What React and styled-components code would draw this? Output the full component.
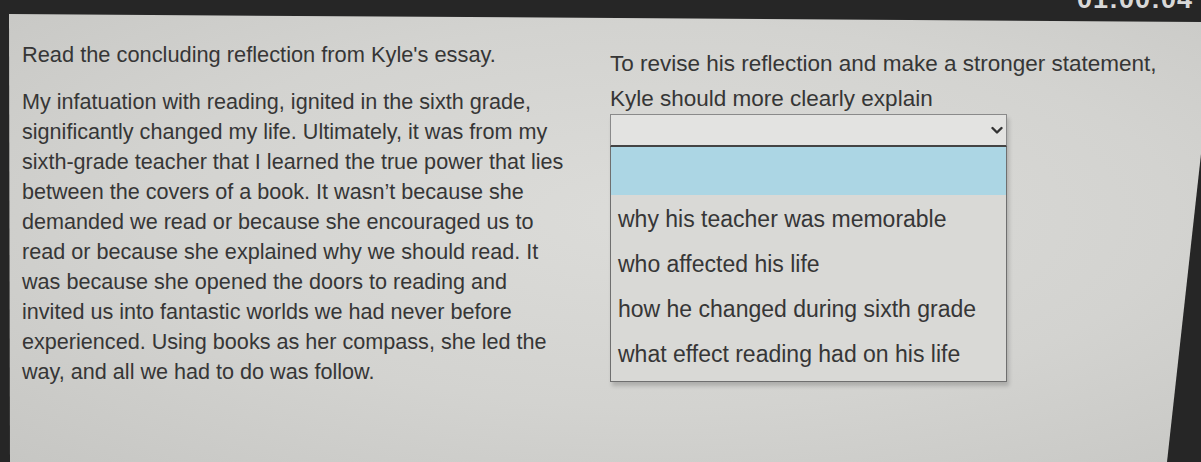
import React from 'react'
import styled, { createGlobalStyle } from 'styled-components'

const GlobalStyle = createGlobalStyle`
  html, body {
    margin: 0;
    padding: 0;
    background: #2a2a2a;
  }
  body {
    font-family: "Liberation Sans", Arial, sans-serif;
  }
`

const Screen = styled.div`
  width: 1201px;
  height: 462px;
  display: flex;
  flex-direction: column;
  background: #262626;
  overflow: hidden;
`

const TopBar = styled.div`
  height: 14px;
  flex: none;
  display: flex;
  justify-content: flex-end;
  align-items: flex-start;
  padding-right: 8px;
  overflow: hidden;
`

const Timer = styled.span`
  font-size: 27px;
  line-height: 1;
  font-weight: 700;
  color: #d8d8d8;
  margin-top: -14px;
  letter-spacing: 1px;
`

const Panel = styled.div`
  flex: 1;
  display: grid;
  grid-template-columns: 588px 1fr;
  padding: 26px 0 0 22px;
  background:
    radial-gradient(ellipse at 55% 45%, #dcdcd9 0%, #d3d3d0 55%, #c6c6c3 100%);
  clip-path: polygon(9px 0, 100% 8px, 100% 140px, calc(100% - 34px) 100%, 18px 100%, 10px 100%);
  color: #363636;
`

const Passage = styled.div`
  display: flex;
  flex-direction: column;
`

const Prompt = styled.p`
  margin: 0 0 17px;
  font-size: 21.8px;
  line-height: 30px;
  white-space: nowrap;
`

const Essay = styled.p`
  margin: 0;
  font-size: 21.6px;
  line-height: 30px;
  white-space: nowrap;
`

const Question = styled.div`
  display: flex;
  flex-direction: column;
  padding-top: 6px;
`

const Stem = styled.p`
  margin: 0 0 -2px;
  font-size: 22.5px;
  line-height: 35px;
  white-space: nowrap;
`

const Dropdown = styled.div`
  width: 397px;
  display: flex;
  flex-direction: column;
  box-shadow: 2px 4px 4px rgba(0, 0, 0, 0.18);
`

const Select = styled.div`
  height: 30px;
  display: flex;
  align-items: center;
  justify-content: flex-end;
  padding-right: 3px;
  background: #e3e3e1;
  border: 1px solid #8a8a8a;
  border-bottom: 2px solid #444;
  color: #333;
`

const List = styled.ul`
  list-style: none;
  margin: 0;
  padding: 0 0 4px;
  background: #d9d9d6;
  border: 1px solid #6f6f6f;
  border-top: none;
`

const Option = styled.li`
  height: ${p => (p.$blank ? '48px' : '45px')};
  display: flex;
  align-items: center;
  padding-left: 7px;
  font-size: 23px;
  color: #363636;
  white-space: nowrap;
  background: ${p => (p.$active ? '#acd6e4' : 'transparent')};
  margin-bottom: ${p => (p.$blank ? '2px' : '0')};
`

const essayLines = [
  'My infatuation with reading, ignited in the sixth grade,',
  'significantly changed my life. Ultimately, it was from my',
  'sixth-grade teacher that I learned the true power that lies',
  'between the covers of a book. It wasn\u2019t because she',
  'demanded we read or because she encouraged us to',
  'read or because she explained why we should read. It',
  'was because she opened the doors to reading and',
  'invited us into fantastic worlds we had never before',
  'experienced. Using books as her compass, she led the',
  'way, and all we had to do was follow.',
]

const choices = [
  'why his teacher was memorable',
  'who affected his life',
  'how he changed during sixth grade',
  'what effect reading had on his life',
]

function Chevron() {
  return (
    <svg width="12" height="9" viewBox="0 0 12 9">
      <path d="M1.5 2 L6 6.5 L10.5 2" fill="none" stroke="#333" strokeWidth="2.4" strokeLinecap="round" strokeLinejoin="round" />
    </svg>
  )
}

export default function App() {
  return (
    <Screen>
      <GlobalStyle />
      <TopBar>
        <Timer>01:00:04</Timer>
      </TopBar>
      <Panel>
        <Passage>
          <Prompt>Read the concluding reflection from Kyle's essay.</Prompt>
          <Essay>
            {essayLines.map((line, i) => (
              <React.Fragment key={i}>
                {line}
                {i < essayLines.length - 1 && <br />}
              </React.Fragment>
            ))}
          </Essay>
        </Passage>
        <Question>
          <Stem>
            To revise his reflection and make a stronger statement,
            <br />
            Kyle should more clearly explain
          </Stem>
          <Dropdown>
            <Select>
              <Chevron />
            </Select>
            <List>
              <Option $blank $active />
              {choices.map(c => (
                <Option key={c}>{c}</Option>
              ))}
            </List>
          </Dropdown>
        </Question>
      </Panel>
    </Screen>
  )
}
